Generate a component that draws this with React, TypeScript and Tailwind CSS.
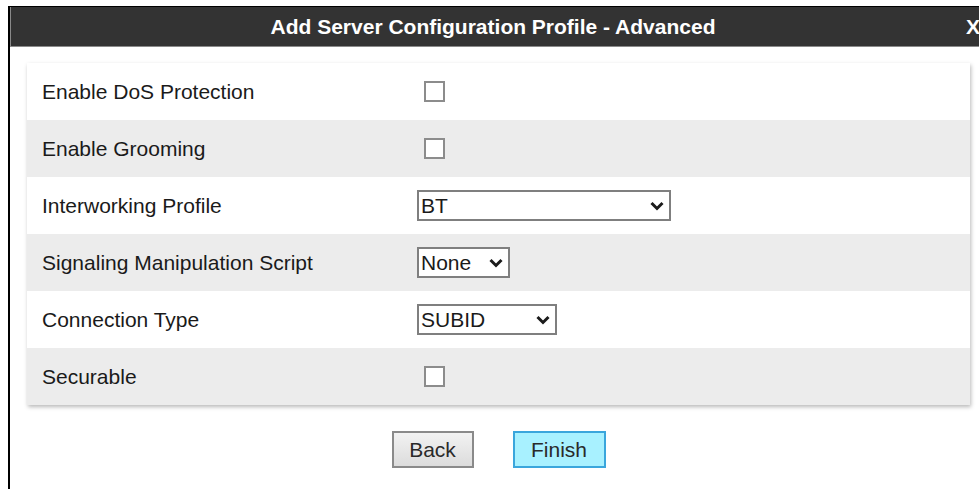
import React from 'react';

// Rows of the "Advanced" step of the server profile wizard
type Field =
  | { label: string; kind: 'check' }
  | { label: string; kind: 'select'; value: string; width: string };

const fields: Field[] = [
  { label: 'Enable DoS Protection', kind: 'check' },
  { label: 'Enable Grooming', kind: 'check' },
  { label: 'Interworking Profile', kind: 'select', value: 'BT', width: 'w-[254px]' },
  { label: 'Signaling Manipulation Script', kind: 'select', value: 'None', width: 'w-[93px]' },
  { label: 'Connection Type', kind: 'select', value: 'SUBID', width: 'w-[140px]' },
  { label: 'Securable', kind: 'check' },
];

function Chevron() {
  return (
    <svg width="14" height="10" viewBox="0 0 14 10" className="shrink-0">
      <polyline points="1.5,2 7,7.5 12.5,2" fill="none" stroke="#1b1b1b" strokeWidth="3" />
    </svg>
  );
}

function FakeSelect({ value, width }: { value: string; width: string }) {
  return (
    <div
      className={`${width} h-[31px] border-2 border-[#7f7f7f] bg-white flex items-center justify-between pl-[2px] pr-[5px] text-[21px] text-[#1a1a1a]`}
    >
      <span>{value}</span>
      <Chevron />
    </div>
  );
}

function CheckBox() {
  return <div className="ml-[7px] w-[21px] h-[21px] border-2 border-[#8c8c8c] bg-white" />;
}

export default function App() {
  return (
    <div
      className="w-[979px] h-[489px] overflow-hidden bg-white pt-[6px] pl-[8px]"
      style={{ fontFamily: '"Liberation Sans", Arial, sans-serif' }}
    >
      <div className="h-full border-l-2 border-t border-black flex flex-col">
        {/* title bar */}
        <div className="relative h-[40px] bg-[#333333] border-l border-b border-[#8a8a8a] flex items-center justify-center">
          <span className="text-white font-bold text-[21px] mr-[4px]">Add Server Configuration Profile - Advanced</span>
          <span className="absolute right-[-1px] top-[9px] text-white font-bold text-[21px] leading-none">X</span>
        </div>

        {/* settings card */}
        <div className="mt-[16px] ml-[17px] mr-[9px] bg-white shadow-[1px_2px_4px_rgba(0,0,0,0.28)]">
          {fields.map((f, i) => (
            <div
              key={f.label}
              className={`h-[57px] flex items-center ${i % 2 === 1 ? 'bg-[#ececec]' : 'bg-white'}`}
            >
              <div className="w-[390px] pl-[15px] text-[21px] text-[#1a1a1a]">{f.label}</div>
              {f.kind === 'check' ? <CheckBox /> : <FakeSelect value={f.value} width={f.width} />}
            </div>
          ))}
        </div>

        {/* wizard buttons */}
        <div className="mt-[26px] ml-[17px] mr-[9px] flex justify-center gap-[39px]">
          <button className="w-[82px] h-[37px] border-2 border-[#8a8a8a] bg-gradient-to-b from-[#f2f2f2] to-[#dcdcdc] text-[21px] text-[#2a2a2a]">
            Back
          </button>
          <button className="w-[93px] h-[37px] border-2 border-[#3aa6dc] bg-[#a8f1ff] text-[21px] text-[#2a2a2a]">
            Finish
          </button>
        </div>
      </div>
    </div>
  );
}
